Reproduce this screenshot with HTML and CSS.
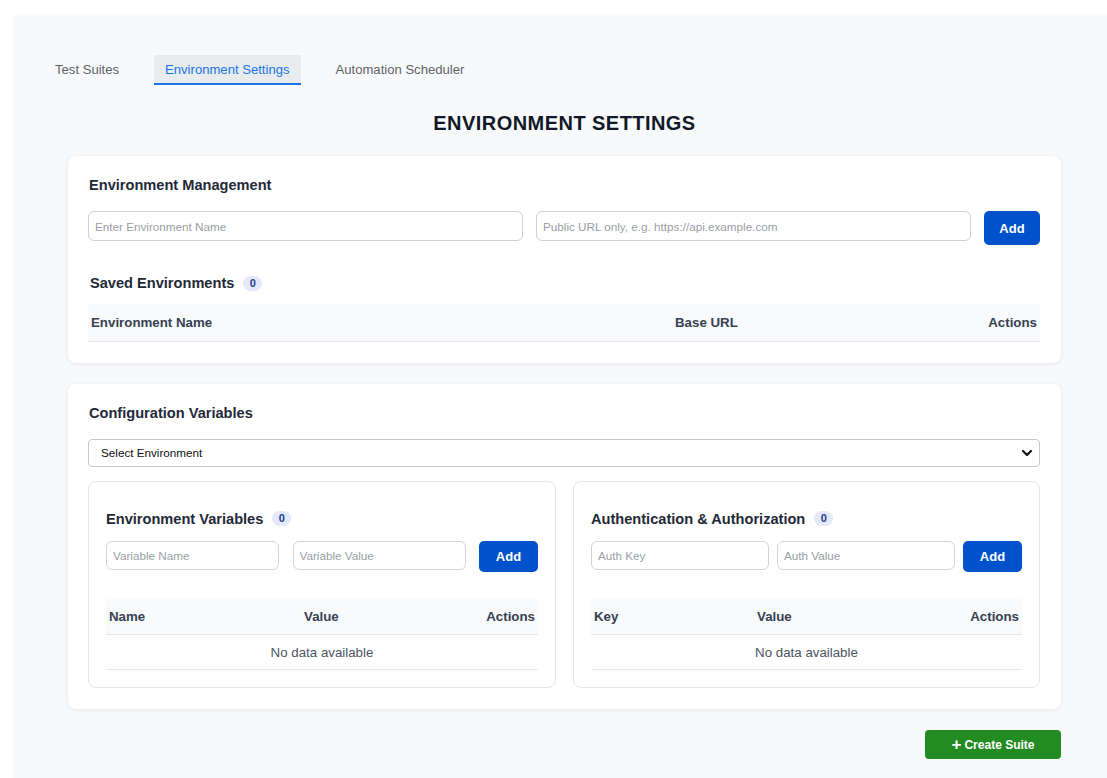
FILE: index.html
```html
<!DOCTYPE html>
<html lang="en">
<head>
<meta charset="utf-8">
<title>Environment Settings</title>
<link rel="stylesheet" href="styles.css">
</head>
<body>
<div class="page">
  <div class="container">
    <nav class="tabs">
      <div class="tab">Test Suites</div>
      <div class="tab active">Environment Settings</div>
      <div class="tab">Automation Scheduler</div>
    </nav>

    <h1 class="title">ENVIRONMENT SETTINGS</h1>

    <div class="cards">
      <section class="card">
        <h2 class="card-title">Environment Management</h2>
        <div class="env-form">
          <input class="input input-tall" type="text" placeholder="Enter Environment Name">
          <input class="input input-tall" type="text" placeholder="Public URL only, e.g. https://api.example.com">
          <button class="btn btn-blue btn-env">Add</button>
        </div>
        <h3 class="sub-title saved">Saved Environments <span class="badge">0</span></h3>
        <table class="table">
          <thead>
            <tr>
              <th class="col-env">Environment Name</th>
              <th>Base URL</th>
              <th class="right">Actions</th>
            </tr>
          </thead>
        </table>
      </section>

      <section class="card card-config">
        <h2 class="card-title">Configuration Variables</h2>
        <div class="select-wrap">
          <select class="select">
            <option>Select Environment</option>
          </select>
          <svg class="chevron" width="12" height="8" viewBox="0 0 12 8"><path d="M2 2l4 4 4-4" fill="none" stroke="#111" stroke-width="2.2" stroke-linecap="round" stroke-linejoin="round"/></svg>
        </div>
        <div class="sub-grid">
          <div class="subcard">
            <h3 class="sub-title">Environment Variables <span class="badge">0</span></h3>
            <div class="var-form gap-wide">
              <input class="input" type="text" placeholder="Variable Name">
              <input class="input" type="text" placeholder="Variable Value">
              <button class="btn btn-blue btn-small">Add</button>
            </div>
            <table class="table small-table">
              <thead>
                <tr>
                  <th class="col-name">Name</th>
                  <th>Value</th>
                  <th class="right">Actions</th>
                </tr>
              </thead>
              <tbody>
                <tr><td colspan="3" class="empty">No data available</td></tr>
              </tbody>
            </table>
          </div>
          <div class="subcard">
            <h3 class="sub-title">Authentication &amp; Authorization <span class="badge">0</span></h3>
            <div class="var-form gap-narrow">
              <input class="input" type="text" placeholder="Auth Key">
              <input class="input" type="text" placeholder="Auth Value">
              <button class="btn btn-blue btn-small">Add</button>
            </div>
            <table class="table small-table">
              <thead>
                <tr>
                  <th class="col-key">Key</th>
                  <th>Value</th>
                  <th class="right">Actions</th>
                </tr>
              </thead>
              <tbody>
                <tr><td colspan="3" class="empty">No data available</td></tr>
              </tbody>
            </table>
          </div>
        </div>
      </section>
    </div>

    <div class="footer">
      <button class="btn btn-green"><span class="plus">+</span>Create Suite</button>
    </div>
  </div>
</div>
</body>
</html>
```

FILE: styles.css
```css
* { box-sizing: border-box; }

html, body {
  margin: 0;
  background: #ffffff;
  overflow: hidden;
  font-family: "Liberation Sans", Arial, sans-serif;
  color: #1f2937;
}

.page {
  padding: 15px 0 0 14px;
  width: 1115px;
}

.container {
  width: 1101px;
  min-height: 800px;
  background: #f7f9fb;
  padding: 40px 30px 30px;
}

.tabs {
  display: flex;
  gap: 24px;
}

.tab {
  font-size: 13.1px;
  color: #5f6368;
  padding: 0 11px;
  height: 30px;
  line-height: 29px;
  border-bottom: 2px solid transparent;
}

.tab.active {
  background: #e9ecef;
  color: #1a73e8;
  border-bottom-color: #1a73e8;
}

.title {
  margin: 26px 0 0;
  text-align: center;
  font-size: 20px;
  font-weight: 700;
  letter-spacing: 0.45px;
  color: #111827;
  line-height: 24px;
}

.cards {
  margin: 21px 24px 0;
  display: flex;
  flex-direction: column;
  gap: 21px;
}

.card {
  background: #ffffff;
  border-radius: 8px;
  box-shadow: 0 1px 4px rgba(15, 23, 42, 0.08);
  padding: 20px 21px 21px 20px;
}

.card-title {
  margin: 0;
  font-size: 14.6px;
  font-weight: 700;
  line-height: 18px;
  color: #1f2937;
  padding-left: 1px;
}

.env-form {
  display: flex;
  align-items: flex-start;
  gap: 13px;
  margin-top: 17px;
}

.input {
  flex: 1;
  min-width: 0;
  height: 29px;
  border: 1px solid #cfd4da;
  border-radius: 6px;
  padding: 0 6px;
  font-family: "Liberation Sans", Arial, sans-serif;
  font-size: 11.7px;
  color: #333;
  background: #fff;
  outline: none;
}

.input::placeholder { color: #9aa0a6; }

.input-tall { height: 30px; }

.btn {
  border: none;
  font-family: "Liberation Sans", Arial, sans-serif;
  font-weight: 700;
  color: #fff;
  cursor: pointer;
}

.btn-blue {
  background: #0052cc;
  border-radius: 5px;
  font-size: 13px;
}

.btn-env {
  width: 56px;
  height: 34px;
  flex: none;
}

.btn-small {
  width: 59px;
  height: 31px;
  flex: none;
  border-radius: 5px;
}

.sub-title {
  margin: 0;
  font-size: 14.6px;
  font-weight: 700;
  line-height: 18px;
  color: #1f2937;
  display: flex;
  align-items: center;
}

.saved {
  margin-top: 29px;
  padding-left: 2px;
}

.badge {
  display: inline-block;
  margin-left: 9px;
  min-width: 19px;
  height: 15px;
  line-height: 15px;
  padding: 0 6px;
  border-radius: 8px;
  background: #e3e9fb;
  color: #1e3a8a;
  font-size: 11px;
  font-weight: 700;
  text-align: center;
}

.table {
  width: 100%;
  border-collapse: collapse;
  margin-top: 12px;
  table-layout: fixed;
}

.table th {
  background: #f8fafc;
  text-align: left;
  font-size: 13.3px;
  font-weight: 700;
  color: #374151;
  height: 37px;
  padding: 0 3px;
  border-bottom: 1px solid #e5e7eb;
}

.table th.right { text-align: right; }

.col-env { width: 584px; }
.col-name { width: 195px; }
.col-key { width: 163px; }

.select-wrap {
  position: relative;
  margin-top: 17px;
}

.select {
  width: 100%;
  height: 28px;
  appearance: none;
  -webkit-appearance: none;
  border: 1px solid #c4c9cf;
  border-radius: 4px;
  background: #fff;
  padding: 0 12px;
  font-family: "Liberation Sans", Arial, sans-serif;
  font-size: 11.7px;
  color: #111;
}

.chevron {
  position: absolute;
  right: 7px;
  top: 10px;
  pointer-events: none;
}

.sub-grid {
  display: grid;
  grid-template-columns: 468px 467px;
  gap: 17px;
  margin-top: 14px;
}

.subcard {
  border: 1px solid #e3e6ea;
  border-radius: 8px;
  padding: 28px 17px 17px;
}

.var-form {
  display: flex;
  align-items: flex-start;
  margin-top: 13px;
}

.gap-wide { gap: 13.5px; }
.gap-narrow { gap: 8.5px; }

.small-table { margin-top: 27px; }

.small-table th { height: 36px; }

.empty {
  text-align: center;
  font-size: 13.3px;
  color: #4b5563;
  height: 35px;
  border-bottom: 1px solid #e5e7eb;
  padding: 0;
}

.footer {
  display: flex;
  justify-content: flex-end;
  margin: 21px 24px 0;
}

.btn-green {
  background: #228b22;
  border-radius: 4px;
  width: 136px;
  height: 29px;
  font-size: 12px;
  display: flex;
  align-items: center;
  justify-content: center;
  gap: 3px;
}

.plus {
  font-size: 17px;
  font-weight: 700;
  line-height: 1;
  margin-top: -1px;
}
```
